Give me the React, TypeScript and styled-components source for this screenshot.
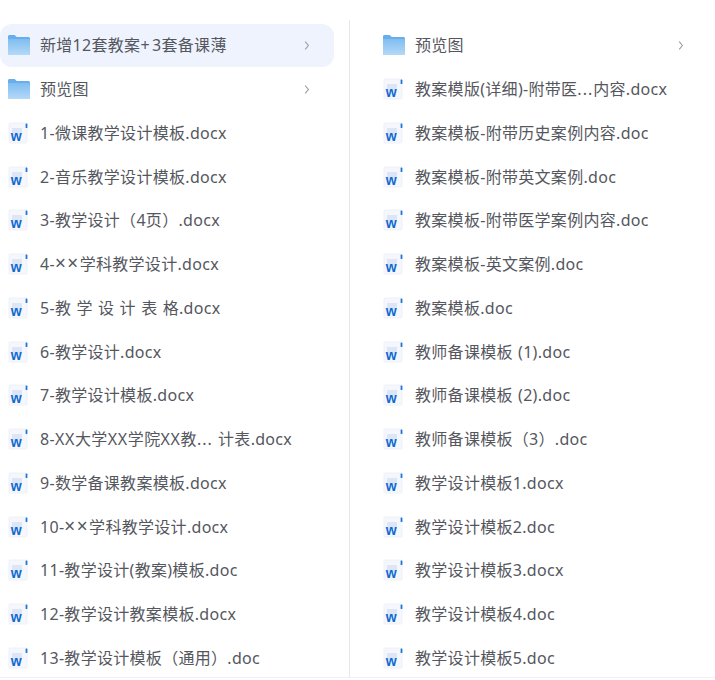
import React from "react";
import styled, { createGlobalStyle } from "styled-components";

const Global = createGlobalStyle`
  html, body { margin: 0; padding: 0; background: #fff; }
  body { font-family: "Noto Sans", "Noto Sans CJK SC", sans-serif; }
`;

const Page = styled.div`
  width: 715px;
  height: 678px;
  overflow: hidden;
  display: grid;
  grid-template-columns: 349px 366px;
  box-sizing: border-box;
  padding-top: 20px;
  border-bottom: 1px solid #f1f1f3;
`;

const Column = styled.div`
  box-sizing: border-box;
  height: 657px;
  padding: 3.5px 15px 0 0;
`;

const DividedColumn = styled(Column)`
  padding: 3.5px 7px 0 25px;
  border-left: 1px solid #e6e7ea;
`;

const Row = styled.div<{ $active?: boolean }>`
  height: 43.76px;
  display: flex;
  align-items: center;
  gap: 10px;
  padding: 0 24px 0 8px;
  box-sizing: border-box;
  border-radius: 12px;
  background: ${(p) => (p.$active ? "#eef3fe" : "transparent")};
`;

const Label = styled.span`
  flex: 1;
  min-width: 0;
  font-size: 16px;
  line-height: 22px;
  letter-spacing: 0.3px;
  word-spacing: 0.8px;
  color: #55575e;
  white-space: pre;
`;

const Loose = styled.span<{ $gap: number }>`
  letter-spacing: ${(p) => p.$gap}px;
`;

const Times = styled.span`
  font-size: 19px;
  line-height: 0;
  letter-spacing: 1.5px;
`;

const gapFor = (part: string) => {
  if (part === "+") return 2.5;
  if (part === "...") return 1;
  return 0.7;
};

const Name = ({ text }: { text: string }) => (
  <Label>
    {text.split(/(×+|X+|\.\.\.|\+)/).map((part, i) => {
      if (i % 2 === 0) return part;
      if (part.startsWith("×")) return <Times key={i}>{part}</Times>;
      return (
        <Loose key={i} $gap={gapFor(part)}>
          {part}
        </Loose>
      );
    })}
  </Label>
);

const FolderIcon = () => (
  <svg width="22" height="20" viewBox="0 0 22 20">
    <defs>
      <linearGradient id="fg" x1="0" y1="0" x2="0" y2="1">
        <stop offset="0" stopColor="#7fbdf0" />
        <stop offset="1" stopColor="#b4d9f8" />
      </linearGradient>
    </defs>
    <path d="M0 1.5C0 .7.6 0 1.5 0h5.2l2 2H20.5c.8 0 1.5.7 1.5 1.500v15c0 .8-.7 1.500-1.500 1.500h-19C.6 20 0 19.300 0 18.500z" fill="#68aeec" />
    <path d="M0 4h20.500c.8 0 1.500.6 1.500 1.400v13.100c0 .8-.7 1.500-1.500 1.500h-19C.6 20 0 19.300 0 18.500z" fill="url(#fg)" />
  </svg>
);

const DocIcon = () => (
  <svg width="22" height="22" viewBox="0 0 22 22">
    <path d="M2 1h15.500c1 0 1.500.5 1.500 1.500V20c0 .6-.5 1-1 1H2c-.6 0-1-.4-1-1V2c0-.6.4-1 1-1z" fill="#f5f7fc" stroke="#eef1f7" strokeWidth="1" />
    <rect x="4" y="6" width="10" height="7" fill="#dde6f6" />
    <rect x="17.600" y="1.500" width="1.800" height="4.500" rx=".6" fill="#1f78d8" />
    <text x="2.800" y="19" fontFamily="'Liberation Sans', sans-serif" fontWeight="700" fontSize="14" fill="#0f6ad0">w</text>
  </svg>
);

const Chevron = () => (
  <svg width="6" height="9" viewBox="0 0 6 9" fill="none" stroke="#9a9da4" strokeWidth="1.100">
    <path d="M1.200 .7 4.400 4.500 1.200 8.300" />
  </svg>
);

type Item = { name: string; folder?: boolean; active?: boolean };

const left: Item[] = [
  { name: "新增12套教案+3套备课薄", folder: true, active: true },
  { name: "预览图", folder: true },
  { name: "1-微课教学设计模板.docx" },
  { name: "2-音乐教学设计模板.docx" },
  { name: "3-教学设计（4页）.docx" },
  { name: "4-××学科教学设计.docx" },
  { name: "5-教 学 设 计 表 格.docx" },
  { name: "6-教学设计.docx" },
  { name: "7-教学设计模板.docx" },
  { name: "8-XX大学XX学院XX教... 计表.docx" },
  { name: "9-数学备课教案模板.docx" },
  { name: "10-××学科教学设计.docx" },
  { name: "11-教学设计(教案)模板.doc" },
  { name: "12-教学设计教案模板.docx" },
  { name: "13-教学设计模板（通用）.doc" },
];

const right: Item[] = [
  { name: "预览图", folder: true },
  { name: "教案模版(详细)-附带医...内容.docx" },
  { name: "教案模板-附带历史案例内容.doc" },
  { name: "教案模板-附带英文案例.doc" },
  { name: "教案模板-附带医学案例内容.doc" },
  { name: "教案模板-英文案例.doc" },
  { name: "教案模板.doc" },
  { name: "教师备课模板 (1).doc" },
  { name: "教师备课模板 (2).doc" },
  { name: "教师备课模板（3）.doc" },
  { name: "教学设计模板1.docx" },
  { name: "教学设计模板2.doc" },
  { name: "教学设计模板3.docx" },
  { name: "教学设计模板4.doc" },
  { name: "教学设计模板5.doc" },
];

const List = ({ items }: { items: Item[] }) => (
  <>
    {items.map((it) => (
      <Row key={it.name} $active={it.active}>
        {it.folder ? <FolderIcon /> : <DocIcon />}
        <Name text={it.name} />
        {it.folder && <Chevron />}
      </Row>
    ))}
  </>
);

export default function App() {
  return (
    <Page>
      <Global />
      <Column>
        <List items={left} />
      </Column>
      <DividedColumn>
        <List items={right} />
      </DividedColumn>
    </Page>
  );
}
